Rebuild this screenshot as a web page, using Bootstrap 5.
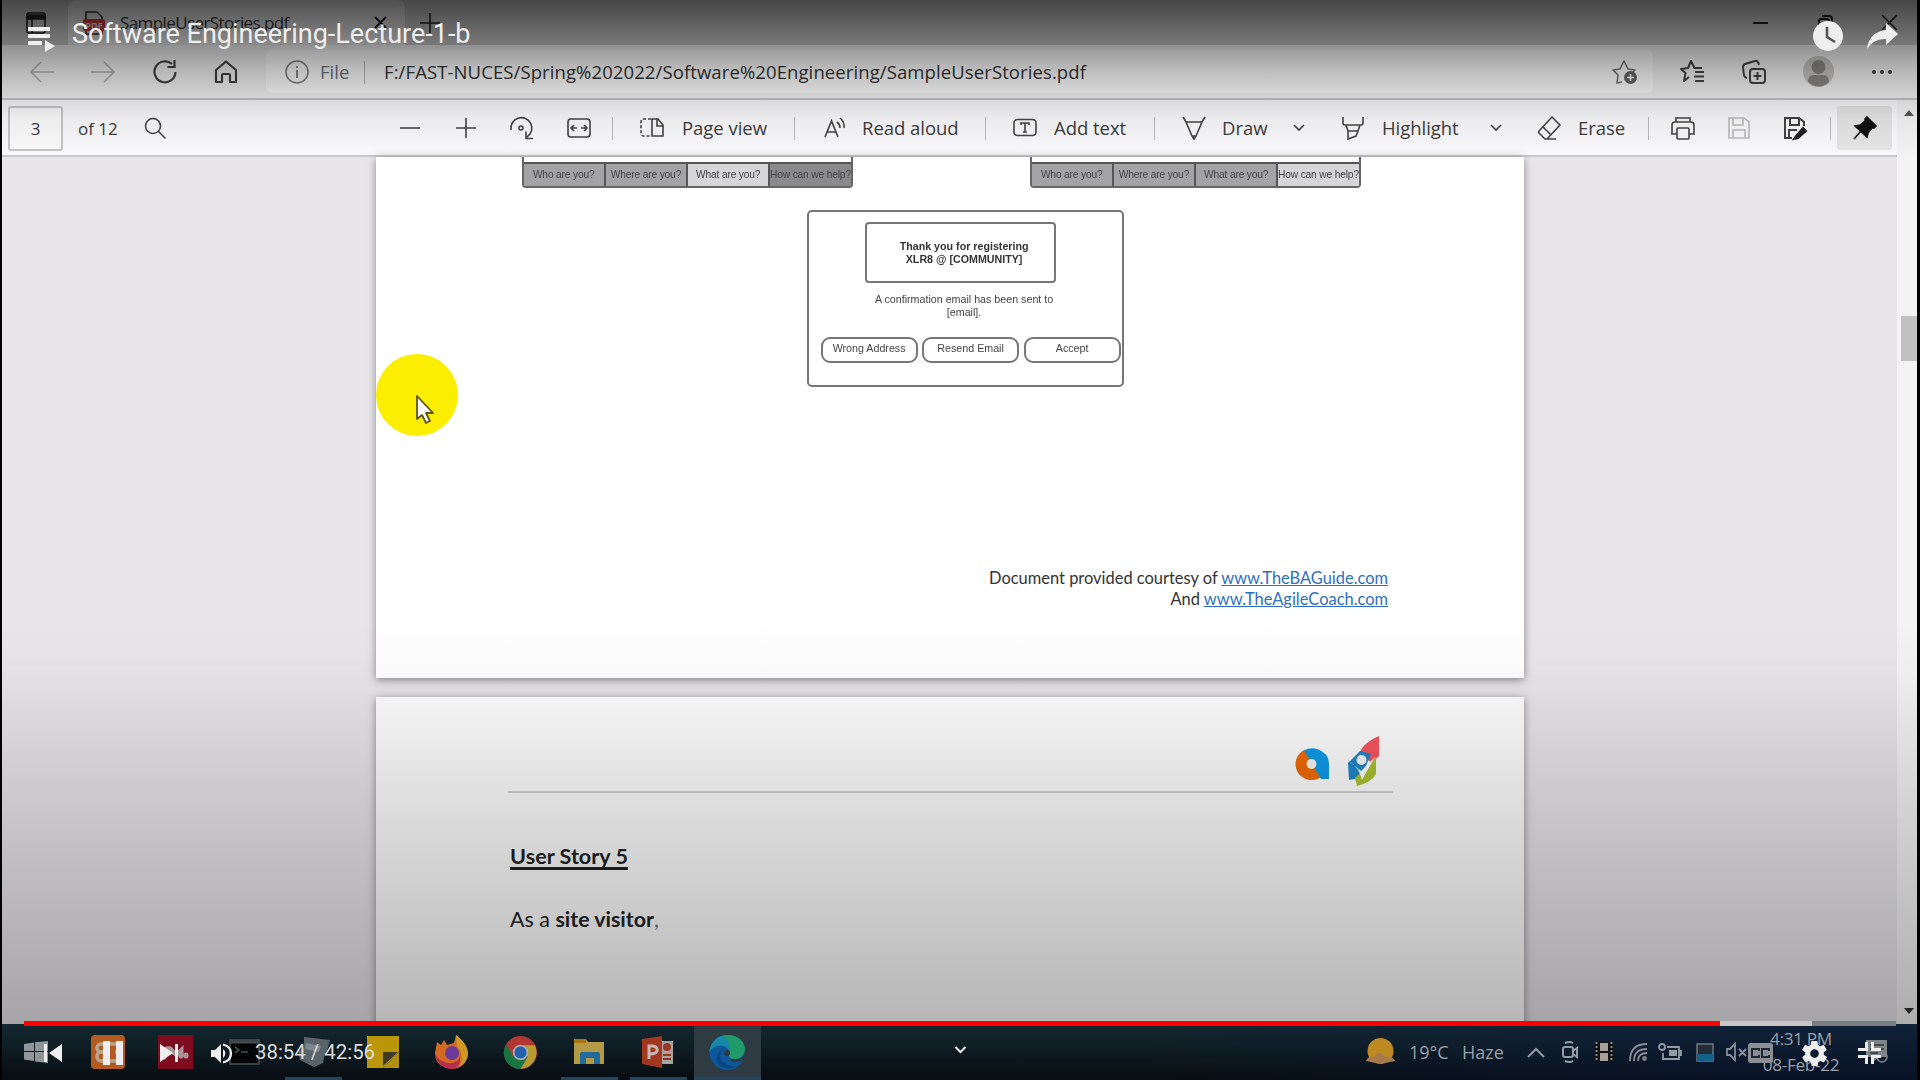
<!DOCTYPE html>
<html lang="en">
<head>
<meta charset="utf-8">
<title>Software Engineering-Lecture-1-b</title>
<link href="https://cdn.jsdelivr.net/npm/bootstrap@5.3.0/dist/css/bootstrap.min.css" rel="stylesheet">
<script src="https://cdn.jsdelivr.net/npm/bootstrap@5.3.0/dist/js/bootstrap.bundle.min.js"></script>
<style>
body{width:1920px;height:1080px;overflow:hidden;background:#000;font-family:"Open Sans","Noto Sans",sans-serif;color:#333;line-height:1}
svg{display:block;overflow:visible;fill:none;stroke:#444;stroke-width:1.6}
.screen{width:1915px;height:1080px;margin-left:2px}
.strip{display:grid;align-items:center;white-space:nowrap}
/* browser chrome */
.tabs-row{height:45px;background:#cdcdcd;grid-template-columns:42px 337px 23px 1fr 65px 64px 35px;padding-left:24px}
.tab-active{height:45px;background:#e9e9e9;border-radius:8px 8px 0 0;grid-template-columns:37px 254px 24px;padding-left:15px;color:#333;font-size:17px;letter-spacing:-.6px}
.addr-row{height:55px;background:#f6f5f6;border-bottom:2px solid #c6c5c7;grid-template-columns:61px 62px 61px 52px 1389px 25px 62px 61px 69px 24px;padding-left:28px}
.url-box{height:43px;background:#fff;border-radius:6px;grid-template-columns:35px 44px 20px 1228px 26px;padding-left:19px;font-size:18.5px;padding-top:1px;width:1387px}
.url-text{letter-spacing:.1px}
.pdf-row{height:57px;background:#f9f8fa;border-bottom:2px solid #c9c8ca;padding:1px 0 0 6px;font-size:18.5px;color:#3c3c3c;grid-template-columns:70px 66px 254px 56px 55px 58px 45px 28px 42px 112px 29px 39px 123px 28px 41px 100px 28px 40px 70px 49px 41px 107px 48px 41px 70px 23px 56px 57px 46px 7px 55px}
.pdf-row>span:not(.vr-line){letter-spacing:-.04px}
.page-no{width:55px;height:45px;border:2px solid #c6c5c7;background:#fbfafb;border-radius:3px;font-size:17px}
.count{font-size:17px}
.vr-line{width:1px;height:23px;background:#bbb}
.pin-box{width:55px;height:44px;background:#e6e5e6;border-radius:3px}
.sbar{width:20px;background:#f4f3f4}
.thumb{width:16px;height:45px;background:#c1c1c1;margin:200px 0 0 4px}
/* document */
.viewer{height:867px;background:#e8e6e9;padding-left:373.6px}
.sheet{width:1148px;background:#fff;box-shadow:0 2px 8px rgba(60,55,65,.55)}
.sheet-a{height:521px}
.sheet-b{height:330px;margin-top:19px;padding:36px 131px 0 132px}
.wire{font-family:"Liberation Sans",Arial,sans-serif;font-size:10.2px;color:#444}
.steps{width:331px;height:31px;border:2px solid #666;border-top:0;border-radius:0 0 4px 4px;padding-top:5px;filter:blur(.5px)}
.steps>div{flex:1 1 0;min-width:0;border-top:2px solid #555;border-right:2px solid #555;background:#a3a2a4;display:flex;align-items:center;justify-content:center;white-space:nowrap;letter-spacing:-.15px}
.steps>div:last-child{border-right:0}
.steps .on{background:#d6d5d7}
.steps .dk{background:#8a898b}
.wire-pair{padding-left:146px;gap:177px}
.dialog-box{width:317px;height:177px;border:2px solid #777;border-radius:5px;margin:22px 0 0 431px;padding:10px 3px 0 12px;filter:blur(.4px);font-size:10.7px}
.thanks{width:191px;height:61px;border:2px solid #777;border-radius:4px;font-weight:700;line-height:13px;color:#333;margin-left:44px;padding-left:8px}
.sent{line-height:13px;margin:10px 11px 0 0}
.pills{gap:4.5px;margin-top:18px}
.pill{width:97px;height:26px;border:2px solid #777;border-radius:9px;padding-bottom:3px}
.credit{font-family:Lato,sans-serif;font-size:16.45px;line-height:21px;color:#333;padding-right:135.5px;margin-top:181px}
.credit a{color:#2f6fc0}
.sheet-b{font-family:Lato,sans-serif;color:#222}
.logo-row{height:60px;border-bottom:2px solid #d3d3d3;padding-right:13px}
.logo-a{margin:15px 19px 0 0}
.story{font-size:21.6px;font-weight:700;text-decoration:underline;text-decoration-thickness:3px;text-underline-offset:3px;margin:53px 0 0 2.5px;text-decoration-skip-ink:none}
.visitor{font-size:21.4px;margin:41px 0 0 2.5px}
/* taskbar */
.taskbar{height:56px;background:linear-gradient(90deg,transparent 60%,rgba(10,25,65,.42) 90%),linear-gradient(#142831,#070d11);color:#98a0a6;font-size:18px;padding-left:22px;grid-template-columns:67px 67px 71px 68px 70px 68px 69px 69px 69px 52px 672px 43px 53px 65px 33px 35px 34px 29px 38px 30px 35px 104px 24px}
.task{height:56px;display:flex;align-items:center}
.run{box-shadow:inset 0 -3px #24455b;width:57px;margin-left:-12px;padding-left:12px}
.edge-on{width:67px;background:#2e3b43;padding-left:15px;margin-left:0}
.stamp{width:80px;text-align:center;line-height:26px;font-size:17.2px;letter-spacing:-.35px}
/* player overlay */
.shade{position:absolute;left:2px;width:1915px}
.shade-top{top:0;height:157px;background:linear-gradient(rgba(0,0,0,.66) 0,rgba(0,0,0,.55) 20px,rgba(0,0,0,.41) 45px,rgba(0,0,0,.25) 72px,rgba(0,0,0,.13) 99px,rgba(0,0,0,.05) 120px,transparent)}
.shade-bottom{top:620px;height:404px;background:linear-gradient(transparent,rgba(0,0,0,.02) 50px,rgba(0,0,0,.05) 85px,rgba(0,0,0,.13) 180px,rgba(0,0,0,.24) 335px,rgba(0,0,0,.285))}
.player-top{position:absolute;left:0;top:0;height:68px;width:1920px;padding-left:28px;color:#eee;font:27px Roboto,sans-serif;grid-template-columns:44px 1741px 54px 30px}
.player-bottom{position:absolute;left:0;top:1026px;height:54px;width:1920px;padding-left:43px;color:#ddd;font:20.4px Roboto,sans-serif;grid-template-columns:60px 57px 51px 44px 699px 794px 54px 56px 24px}
.player-bottom>span{margin-top:-2px}
.player-top svg,.player-bottom svg{fill:#eee;stroke:none}
.seek{position:absolute;left:24px;top:1021px;width:1872px;height:5px;background:#777d80;border-radius:0}
.seek .played{background:red}
.seek .loaded{background:#c6c6c6}
.pointer{position:absolute;left:375.500px;top:354px}
</style>
</head>
<body>
<div class="screen d-flex flex-column">
  <div class="strip tabs-row">
    <svg width="20" height="22" viewBox="0 0 20 22" style="stroke:#222"><rect x="1" y="1" width="18" height="20" rx="2"/><path d="M1 3h18v4H1z" fill="#222"/><path d="M6 6v15"/></svg>
    <div class="strip tab-active">
      <svg width="22" height="24" viewBox="0 0 22 24"><path d="M3 9V1h11l5 5v17H3v-5" stroke="#333"/><rect x="0" y="8" width="22" height="12" rx="2" fill="#d33b3e" stroke="none"/><text x="11" y="17.500" text-anchor="middle" font-size="9" font-weight="700" letter-spacing="0" fill="#eee" stroke="none">PDF</text></svg>
      <span>SampleUserStories.pdf</span>
      <svg width="13" height="13" viewBox="0 0 13 13" style="stroke:#222;stroke-width:2"><path d="M1 1l11 11M12 1L1 12"/></svg>
    </div>
    <svg width="20" height="20" viewBox="0 0 20 20" style="stroke:#222;margin-left:15px"><path d="M10 0v20M0 10h20"/></svg>
    <span></span>
    <svg width="15" height="15" viewBox="0 0 15 15" style="stroke:#222;stroke-width:2"><path d="M0 8h15"/></svg>
    <svg width="15" height="15" viewBox="0 0 15 15" style="stroke:#222;stroke-width:2"><rect x="1" y="4" width="10" height="10" rx="2"/><path d="M4 1h7q3 0 3 3v7"/></svg>
    <svg width="15" height="15" viewBox="0 0 15 15" style="stroke:#222"><path d="M0 0l15 15M15 0L0 15"/></svg>
  </div>
  <div class="strip addr-row">
    <svg width="24" height="22" viewBox="0 0 24 22" style="stroke:#b3b3b3"><path d="M24 11H2M11 1L1 11l10 10"/></svg>
    <svg width="24" height="22" viewBox="0 0 24 22" style="stroke:#b3b3b3"><path d="M0 11h22M13 1l10 10-10 10"/></svg>
    <svg width="24" height="24" viewBox="0 0 24 24" style="stroke-width:2.2"><path d="M22.500 12a10.500 10.500 0 1 1-3.500-8M21.500 0v7h-7"/></svg>
    <svg width="24" height="24" viewBox="0 0 24 24" style="stroke-width:2.2"><path d="M2 10L12 1.500 22 10v12h-6v-7q0-1-1-1H9q-1 0-1 1v7H2z" stroke-linejoin="round"/></svg>
    <div class="strip url-box">
      <svg width="24" height="24" viewBox="0 0 24 24" style="stroke:#888"><circle cx="12" cy="12" r="11"/><path d="M12 10v8M12 6v2" stroke-width="2"/></svg>
      <span class="text-secondary">File</span>
      <span class="vr-line"></span>
      <span class="url-text">F:/FAST-NUCES/Spring%202022/Software%20Engineering/SampleUserStories.pdf</span>
      <svg width="26" height="25" viewBox="0 0 26 25" style="stroke:#777"><path d="M10 22l-5 1 1-8-5-5 7-1 4-8 4 8 7 1-2 2" stroke-linejoin="round"/><circle cx="18.500" cy="17.500" r="6.500" fill="#666" stroke="none"/><path d="M18.500 14v7M15 17.500h7" stroke="#fff"/></svg>
    </div>
    <span></span>
    <svg width="25" height="24" viewBox="0 0 25 24" style="stroke-width:2"><path d="M9 17l-5 4 1.500-8L1 9l7-1 3-7 3.500 7H22M15 12h9M14 16.500h10M15 21h9" stroke-linejoin="round"/></svg>
    <svg width="24" height="24" viewBox="0 0 24 24" style="stroke-width:2"><rect x="8" y="9" width="15" height="14" rx="3"/><path d="M15.500 12v8M11.500 16h8M5 18C1 17 2 14 1 7q0-2 2-3l10-3q3-1 4 4"/></svg>
    <svg width="31" height="31" viewBox="0 0 31 31" style="stroke:none"><circle cx="15.500" cy="15.500" r="15.500" fill="#c9c8c7"/><circle cx="15.500" cy="11" r="7" fill="#8c8a88"/><path d="M5 26q0-7 6-7h9q6 0 6 7-10 9-21 0" fill="#8c8a88"/></svg>
    <svg width="20" height="4" viewBox="0 0 20 4" style="fill:#333;stroke:none"><circle cx="2" cy="2" r="2"/><circle cx="10" cy="2" r="2"/><circle cx="18" cy="2" r="2"/></svg>
  </div>
  <div class="d-flex">
    <div class="flex-grow-1">
      <div class="strip pdf-row">
        <div class="page-no d-flex align-items-center justify-content-center">3</div>
        <span class="count">of 12</span>
        <svg width="22" height="22" viewBox="0 0 22 22"><circle cx="9" cy="9" r="7.500"/><path d="M14.500 14.500l7 7"/></svg>
        <svg width="24" height="24" viewBox="0 0 24 24"><path d="M2 12h20"/></svg>
        <svg width="24" height="24" viewBox="0 0 24 24"><path d="M2 12h20M12 2v20"/></svg>
        <svg width="24" height="24" viewBox="0 0 24 24"><path d="M2 14a10.500 10.500 0 1 1 16 7M17 15.500v7h7"/><circle cx="12" cy="12" r="2"/></svg>
        <svg width="24" height="24" viewBox="0 0 24 24"><rect x="1" y="3" width="22" height="18" rx="3"/><path d="M10 12H4M7 9l-3 3 3 3M14 12h6M17 9l3 3-3 3"/></svg>
        <span class="vr-line"></span>
        <svg width="24" height="24" viewBox="0 0 24 24"><path d="M11 3H4q-3 0-3 3v11q0 3 3 3h6" stroke-dasharray="3 2"/><path d="M12 3h6l5 6v11H12zM17 3v7h6"/></svg>
        <span>Page view</span>
        <span class="vr-line"></span>
        <svg width="24" height="24" viewBox="0 0 24 24"><path d="M2 21L8.500 5 15 21M4 16h9M14 6q3 2 3 6M17 2q5 4 4 10"/></svg>
        <span>Read aloud</span>
        <span class="vr-line"></span>
        <svg width="24" height="24" viewBox="0 0 24 24"><rect x="1" y="3.500" width="22" height="16" rx="3.500"/><path d="M8 9V7h8v2M12 7v9M10 16h4"/></svg>
        <span>Add text</span>
        <span class="vr-line"></span>
        <svg width="24" height="24" viewBox="0 0 24 24"><path d="M1 1l3 5h16l3-5M4 6l6 14h4l6-14M10 20l2 3 2-3"/></svg>
        <span>Draw</span>
        <svg width="14" height="8" viewBox="0 0 14 8"><path d="M2 1l5 5 5-5"/></svg>
        <svg width="24" height="24" viewBox="0 0 24 24"><path d="M2 1v6q0 2 2 2h16q2 0 2-2V1M5 9l2 6h10l2-6M7 15v8l8-3 2-5"/></svg>
        <span>Highlight</span>
        <svg width="14" height="8" viewBox="0 0 14 8"><path d="M2 1l5 5 5-5"/></svg>
        <svg width="24" height="24" viewBox="0 0 24 24"><path d="M2 15L15 1l8 8-13 14H8l-6-6q-1-1 0-2M6 11l8 8M9 23h10" stroke-linejoin="round"/></svg>
        <span>Erase</span>
        <span class="vr-line"></span>
        <svg width="24" height="24" viewBox="0 0 24 24"><path d="M5 6V2h14v4M6 18H1V9q0-3 3-3h16q3 0 3 3v9h-5"/><rect x="6" y="12" width="12" height="11" rx="1"/></svg>
        <svg width="24" height="24" viewBox="0 0 24 24" style="stroke:#bbb"><path d="M2 2h15l5 4v16H2zM6 2v7h10V2M6 22v-8h12v8"/></svg>
        <svg width="24" height="24" viewBox="0 0 24 24" style="stroke-width:2"><path d="M8 22H1V2h14l5 4v4M6 2v7h9V2M5 22v-8h8"/><path d="M12 20l7-8 3 3-8 7-4 1z" fill="#222" stroke="#222"/></svg>
        <span class="vr-line"></span>
        <div class="pin-box d-flex align-items-center justify-content-center"><svg width="24" height="24" viewBox="0 0 24 24" style="stroke:#111"><path d="M1 23l7-8"/><path d="M14 1l9 9-2 2h-2l-4 5-1 4-12-11 5-1 5-4V3z" fill="#111"/></svg></div>
      </div>
      <div class="viewer">
        <div class="sheet sheet-a wire">
          <div class="d-flex wire-pair">
            <div class="steps d-flex"><div>Who are you?</div><div>Where are you?</div><div class="on">What are you?</div><div class="dk">How can we help?</div></div>
            <div class="steps d-flex"><div>Who are you?</div><div>Where are you?</div><div>What are you?</div><div class="on">How can we help?</div></div>
          </div>
          <div class="dialog-box">
            <div class="thanks d-flex align-items-center justify-content-center text-center">Thank you for registering<br>XLR8 @ [COMMUNITY]</div>
            <div class="sent text-center">A confirmation email has been sent to<br>[email].</div>
            <div class="d-flex pills">
              <div class="pill d-flex align-items-center justify-content-center flex-shrink-0">Wrong Address</div>
              <div class="pill d-flex align-items-center justify-content-center flex-shrink-0">Resend Email</div>
              <div class="pill d-flex align-items-center justify-content-center flex-shrink-0">Accept</div>
            </div>
          </div>
          <div class="credit text-end">Document provided courtesy of <a href="#">www.TheBAGuide.com</a><br>And <a href="#">www.TheAgileCoach.com</a></div>
        </div>
        <div class="sheet sheet-b">
          <div class="logo-row d-flex justify-content-end">
            <svg class="logo-a" width="33" height="32" viewBox="0 0 33 32" style="stroke:none"><path d="M9 1.500A16 16 0 1 0 25 29L16 16z" fill="#f26c05"/><path d="M8 2.500Q14-1 21 1q12 4 12 15v15h-8L16 16z" fill="#0d9be8"/><circle cx="15.500" cy="16" r="5" fill="#f8f8f8"/></svg>
            <svg width="32" height="54" viewBox="0 0 32 54" style="stroke:none;margin-top:-1px"><path d="M12 22Q13 12 31 4v20l-7 7z" fill="#fb5560"/><path d="M0 31l12-12 11 3-3 7-7 17-12 2z" fill="#2086c8"/><path d="M28 25v17q-4 8-19 12l-2-8z" fill="#abc231"/><path d="M1 29l12 10 14-14q-8 14-13 23Q11 35 1 29z" fill="#fff"/><circle cx="13.500" cy="28" r="5" fill="#f8f8f8"/></svg>
          </div>
          <div class="story"><span>User Story 5</span></div>
          <div class="visitor">As a <b>site visitor</b><span class="text-secondary">,</span></div>
        </div>
      </div>
    </div>
    <div class="sbar d-flex flex-column">
      <svg width="10" height="6" viewBox="0 0 10 6" style="margin:10px 0 0 7px;fill:#555;stroke:none"><path d="M0 6l5-6 5 6z"/></svg>
      <div class="thumb"></div>
      <svg class="mt-auto" width="10" height="6" viewBox="0 0 10 6" style="margin:0 0 10px 7px;fill:#333;stroke:none"><path d="M0 0l5 6 5-6z"/></svg>
    </div>
  </div>
  <div class="strip taskbar">
    <svg width="24" height="22" viewBox="0 0 24 22" style="fill:#8e969a;stroke:none"><path d="M0 3l10-1.500V10H0zM11 1.300L24 0v10H11zM0 11h10v9L0 18.500zM11 11h13v11l-13-1.500z"/></svg>
    <svg width="34" height="34" viewBox="0 0 34 34" style="stroke:#b8a590;stroke-width:3.500"><rect width="34" height="34" rx="4" fill="#b45a1e" stroke="none"/><rect x="6" y="9" width="9" height="8" rx="4"/><rect x="6" y="17" width="9" height="9" rx="4"/><path d="M19 9h5q5 0 4 5 0 3-4 3 5 0 5 5 0 4-5 4h-5"/></svg>
    <svg width="35" height="34" viewBox="0 0 35 34" style="stroke:#a8959a;stroke-width:5;stroke-linecap:round"><rect width="35" height="34" fill="#7e0c1e" stroke="none"/><path d="M6 22v-6q5-5 8 0 4 5 9 0v5M28 20v1"/></svg>
    <svg width="30" height="26" viewBox="0 0 30 26" style="stroke:#454c50"><rect x="1" y="1" width="29" height="24" fill="#030506"/><path d="M1 3h29" stroke-width="3"/><path d="M6 8l4 3-4 3M12 13h7"/></svg>
    <div class="task run"><svg width="34" height="30" viewBox="0 0 34 30" style="fill:#59646a;stroke:none"><path d="M7 0l26 3-4 14-22-3zM1 14l9-4 18 6-2 10-9 4-14-7z"/><path d="M9 6l15 3-2 6-14-3z" fill="#7d878c"/></svg></div>
    <svg width="32" height="32" viewBox="0 0 32 32" style="stroke:none"><path d="M0 0h32v16L16 32H0z" fill="#b99708"/><path d="M32 16v16H16z" fill="#b28f0c"/><path d="M16 16h15L16 30z" fill="#3f3a26"/></svg>
    <svg width="33" height="34" viewBox="0 0 33 34" style="stroke:none"><path d="M2 7l4 3 3-5 3 5 7-2 2-8q11 10 12 17-1 16-16 17Q0 32 0 18z" fill="#d36a22"/><path d="M21 0q11 8 12 18 0 9-8 13 5-10-3-20z" fill="#cf9a22"/><path d="M0 18q3 8 13 10 9 1 12-6 1 12-10 12Q2 32 0 18" fill="#b92e50"/><circle cx="17" cy="18" r="7" fill="#6c3b9a"/></svg>
    <svg width="33" height="33" viewBox="0 0 32 32" style="stroke:none"><circle cx="16" cy="16" r="16" fill="#b33730"/><path d="M2 8a16 16 0 0 0 14 24l7-12H9z" fill="#167542"/><path d="M16 32A16 16 0 0 0 30 9H16l7 11z" fill="#b99a30"/><circle cx="16" cy="16" r="7.500" fill="#a4acb4"/><circle cx="16" cy="16" r="5.800" fill="#2560ae"/></svg>
    <div class="task run"><svg width="32" height="26" viewBox="0 0 32 26" style="stroke:none"><path d="M1 0h12l2 3h16v22H1z" fill="#b49a45"/><path d="M1 0h12v4H1z" fill="#a87410"/><path d="M7 25V15q0-2 2-2h16q2 0 2 2v10h-6v-6h-8v6z" fill="#216a9c"/></svg></div>
    <div class="task run"><svg width="32" height="32" viewBox="0 0 32 32" style="stroke:none"><path d="M17 5h14v23H17z" fill="#a7a3a0"/><path d="M21 19h8M21 23h8" stroke="#9a3524" stroke-width="2"/><circle cx="25" cy="11" r="4" fill="#9a3524"/><path d="M0 3l20-3v32L0 28z" fill="#a1371f"/><path d="M7 23V10h4q5 1 4 5-1 3-7 3" stroke="#c6b8b3" stroke-width="3"/></svg></div>
    <div class="task run edge-on"><svg width="36" height="35" viewBox="0 0 36 35" style="stroke:none"><circle cx="18" cy="17.500" r="17.500" fill="#0d589c"/><path d="M0 17Q3 1 18 0q17 1 18 14-1 10-11 10-6 0-5-4 2-6-5-9Q6 9 0 17" fill="#1788a7"/><path d="M14 .5Q33-2 36 14q-1 10-11 10-6 0-5-4 4-12-6-19.500" fill="#1f9a68"/><path d="M36 24q-7 4-13 3l-3-5q2 3 8 2 5 0 8-6z" fill="#2e3b43"/><path d="M14 13q-6 8 0 14 5 5 13 4-8 5-16 0-8-8 3-18" fill="#0a4580"/><circle cx="18" cy="18" r="3" fill="#2c3b43"/></svg></div>
    <svg width="29" height="28" viewBox="0 0 29 28" style="stroke:none"><circle cx="14.500" cy="13" r="13" fill="#bd8a22"/><path d="M0 23q2-5 8-4 6-8 11 0 8-1 10 4-14 4-29 0" fill="#a7794f"/></svg>
    <span>19°C</span><span>Haze</span>
    <svg width="18" height="11" viewBox="0 0 18 11" style="stroke:#929ca4;stroke-width:2"><path d="M1 10l8-8 8 8"/></svg>
    <svg width="20" height="22" viewBox="0 0 20 22" style="stroke:#929ca4;stroke-width:2"><rect x="3" y="6" width="10" height="10" rx="2"/><path d="M13 10l4-3v9l-4-3M5 2q5-2 8 0M5 20q5 2 8 0"/></svg>
    <svg width="18" height="20" viewBox="0 0 18 20" style="stroke:#888;stroke-width:2"><rect width="18" height="20" fill="#111" stroke="none"/><path d="M1.500 0v20M16.500 0v20" stroke-dasharray="2 2"/><path d="M5 1h8v8H5zM5 11h8v8H5z" fill="#a7a09a" stroke="none"/></svg>
    <svg width="18" height="18" viewBox="0 0 18 18" style="stroke:#858d95;stroke-width:1.800"><path d="M1 18Q1 1 18 1M5 18Q5 6 18 6M9 18q0-8 9-8"/><circle cx="15.500" cy="15.500" r="1.500"/></svg>
    <svg width="25" height="18" viewBox="0 0 25 18" style="stroke:#929ca4;stroke-width:1.800"><path d="M9 4h12v12H5v-6M21 8h2v4h-2"/><circle cx="4" cy="4" r="3"/><path d="M11 7h8v6h-8z" fill="#929ca4" stroke="none"/></svg>
    <svg width="18" height="19" viewBox="0 0 18 19" style="stroke:#69717a"><rect x="1" y="1" width="16" height="17" fill="#222c37"/><path d="M1 11h16v7H1z" fill="#14628a" stroke="none"/></svg>
    <svg width="23" height="18" viewBox="0 0 23 18" style="stroke:#858d95;stroke-width:1.800"><path d="M1 6h3l5-5v16l-5-5H1zM13 6l7 7M20 6l-7 7"/></svg>
    <div class="stamp">4:31 PM<br>08-Feb-22</div>
    <svg width="23" height="24" viewBox="0 0 23 24" style="stroke:#30373d;margin-top:-2px"><path d="M1 1h21v17h-8l-6 5v-5H1z" fill="#7d8488" stroke="none"/><path d="M5 6h14M5 10h14M5 14h8"/><circle cx="17" cy="18" r="5" stroke="#7d8488"/></svg>
  </div>
</div>

<div class="pointer">
  <svg width="82" height="82" viewBox="0 0 82 82" style="stroke:none"><circle cx="41" cy="41" r="41" fill="#fbee00"/><path d="M41 42v23l5-4 4 8 4-2-4-8h7z" fill="#fff" stroke="#5e5412" stroke-width="1.800" stroke-linejoin="round"/></svg>
</div>
<div class="shade shade-top"></div>
<div class="shade shade-bottom"></div>

<div class="strip player-top">
  <svg width="27" height="25" viewBox="0 0 27 25" style="margin-top:10px"><path d="M0 0h22v4H0zM0 7h22v4H0zM0 14h14v4H0zM17 13l10 6-10 6z"/></svg>
  <span>Software Engineering-Lecture-1-b</span>
  <svg width="30" height="30" viewBox="0 0 30 30" style="margin-top:4px"><circle cx="15" cy="15" r="15"/><path d="M14 6v10l8 5" stroke="#555" stroke-width="2.600" fill="none"/></svg>
  <svg width="31" height="26" viewBox="0 0 31 26" style="margin-top:4px"><path d="M19 0l12 11-12 11v-6Q7 15 0 26 2 9 19 7z"/></svg>
</div>
<div class="seek d-flex"><div class="played" style="width:1696px"></div><div class="loaded" style="width:92px"></div></div>
<div class="strip player-bottom">
  <svg width="19" height="18" viewBox="0 0 19 18"><path d="M1 0h3v18H1zM19 0v18L6 9z"/></svg>
  <svg width="20" height="24" viewBox="0 0 20 24"><path d="M0 0h7v24H0zM13 0h7v24h-7z"/></svg>
  <svg width="19" height="18" viewBox="0 0 19 18"><path d="M0 0l13 9L0 18zM15 0h3v18h-3z"/></svg>
  <svg width="23" height="21" viewBox="0 0 23 21"><path d="M0 7h4l6-6v19l-6-6H0zM12 6q5 4 0 9z"/><path d="M12 1.500q8 2 8 9t-8 9" fill="none" stroke="#eee" stroke-width="2.300"/></svg>
  <span>38:54 / 42:56</span>
  <svg width="13" height="8" viewBox="0 0 13 8" style="margin-top:-6px"><path d="M1.500 1l5 5 5-5" fill="none" stroke="#eee" stroke-width="2"/></svg>
  <svg width="25" height="20" viewBox="0 0 25 20"><rect width="25" height="20" rx="2.500" style="fill:#8b8f93"/><path d="M11 8V6H4v8h7v-2M21 8V6h-7v8h7v-2" fill="none" stroke="#1c2635" stroke-width="2"/></svg>
  <svg width="25" height="25" viewBox="2 2 20 20"><path d="M19.400 13a7.500 7.500 0 0 0 0-2l2.100-1.600c.2-.2.300-.4.100-.7l-2-3.400c-.1-.2-.4-.3-.6-.2l-2.500 1a7.300 7.300 0 0 0-1.700-1l-.4-2.600c0-.3-.2-.5-.5-.5h-4c-.2 0-.4.200-.5.400l-.4 2.700c-.6.300-1.200.6-1.700 1l-2.500-1c-.2-.1-.5 0-.6.200l-2 3.400c-.1.300-.1.500.1.700L4.600 11a7.900 7.900 0 0 0 0 2l-2.100 1.600c-.2.200-.3.400-.1.700l2 3.400c.1.200.4.300.6.200l2.500-1c.5.400 1.100.8 1.700 1l.4 2.600c.1.300.3.500.5.500h4c.3 0 .5-.2.500-.5l.4-2.600c.6-.2 1.200-.6 1.700-1l2.500 1c.2.100.5 0 .6-.2l2-3.400c.2-.3.100-.5-.1-.7zM12 15.500a3.500 3.500 0 1 1 0-7 3.500 3.500 0 0 1 0 7z" fill-rule="evenodd"/></svg>
  <svg width="23" height="22" viewBox="0 0 23 22"><path d="M7 0h3v9H0V6h7zM13 0h3v6h7v3H13zM0 13h10v9H7v-6H0zM13 13h10v3h-7v6h-3z"/></svg>
</div>
</body>
</html>
